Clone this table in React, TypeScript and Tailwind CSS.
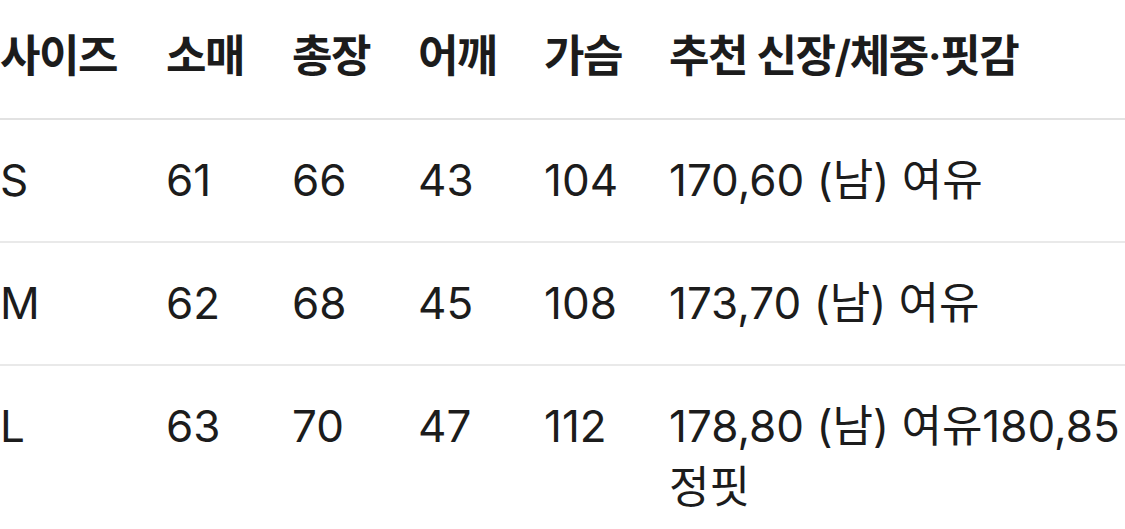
import React from 'react';

const rows = [
  { size: 'S', sleeve: '61', length: '66', shoulder: '43', chest: '104', rec: '170,60 (남) 여유' },
  { size: 'M', sleeve: '62', length: '68', shoulder: '45', chest: '108', rec: '173,70 (남) 여유' },
  { size: 'L', sleeve: '63', length: '70', shoulder: '47', chest: '112', rec: '178,80 (남) 여유180,85 정핏' },
];

const cols = 'grid grid-cols-[166px_126px_126px_126px_125px_1fr]';

export default function App() {
  return (
    <div
      className="w-[1125px] h-[529px] overflow-hidden bg-white text-[#1c1c1c] text-[44px] leading-[61px]"
      style={{ fontFamily: 'Inter, "Noto Sans CJK KR", sans-serif' }}
    >
      {/* Header */}
      <div className={`${cols} h-[120px] items-center border-b-2 border-[#e2e2e2] font-semibold tracking-[-1.5px] pb-[6px]`}>
        <div>사이즈</div>
        <div>소매</div>
        <div>총장</div>
        <div>어깨</div>
        <div>가슴</div>
        <div className="whitespace-nowrap">추천 신장/체중·핏감</div>
      </div>

      {rows.map((r, i) => (
        <div
          key={r.size}
          className={`${cols} py-[30px] ${i < rows.length - 1 ? 'border-b-2 border-[#e9e9e9]' : ''}`}
        >
          <div>{r.size}</div>
          <div>{r.sleeve}</div>
          <div>{r.length}</div>
          <div>{r.shoulder}</div>
          <div>{r.chest}</div>
          <div>{r.rec}</div>
        </div>
      ))}
    </div>
  );
}
